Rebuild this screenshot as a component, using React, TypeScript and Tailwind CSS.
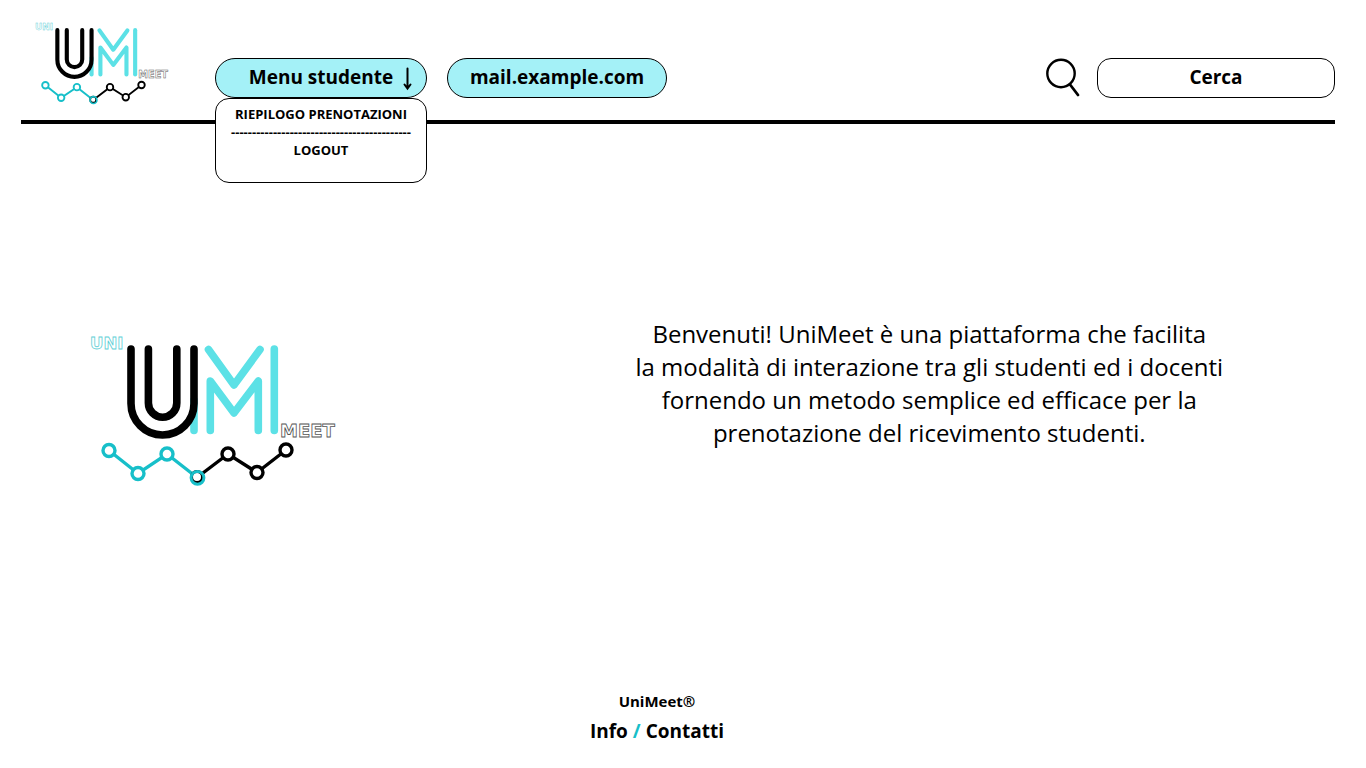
import { useState } from "react";

function Logo({ className }: { className: string }) {
  return (
    <svg viewBox="88 334 256 155" className={className} role="img" aria-label="UniMeet">
      <g fill="none" strokeLinecap="round" strokeLinejoin="round" strokeWidth="7.6">
        <g stroke="#5ce1e6">
          <path d="M194 400V430.5" />
          <path d="M210.3 430.5V381L234 413L258.3 381V430.5" />
          <path d="M208.5 349.5L234 385L260 349.5" />
          <path d="M274.3 349V430.5" />
        </g>
        <g stroke="#000">
          <path d="M131 349V403.5A31.5 31.5 0 0 0 194 403.5V349" />
          <path d="M148.4 349V403A14.2 14.2 0 0 0 176.8 403V349" />
        </g>
      </g>
      <g fontFamily="DejaVu Sans" fontWeight="700" fill="#fff" strokeWidth="0.8">
        <text x="90" y="349" fontSize="16.5" stroke="#5fcfd6">
          UNI
        </text>
        <text x="280" y="437" fontSize="18" stroke="#555">
          MEET
        </text>
      </g>
      <g strokeWidth="3.4" fill="#fff">
        <path d="M197 477.5L228 454L257 472.5L286 450" stroke="#000" fill="none" />
        <path d="M109 450.5L138 473.5L167 454L197 477.5" stroke="#17bfc9" fill="none" />
        <g stroke="#000">
          <circle cx="228" cy="454" r="6" />
          <circle cx="257" cy="472.5" r="6" />
          <circle cx="286" cy="450" r="6" />
          <circle cx="197" cy="477" r="5.5" strokeWidth="3" />
        </g>
        <g stroke="#17bfc9">
          <circle cx="109" cy="450.5" r="6" />
          <circle cx="138" cy="473.5" r="6" />
          <circle cx="167" cy="454" r="6" />
          <circle cx="197.5" cy="477.8" r="6.4" fill="none" strokeWidth="3" />
        </g>
      </g>
    </svg>
  );
}

function StudentMenu() {
  const [open, setOpen] = useState(true);
  return (
    <div className="relative">
      <button
        type="button"
        aria-expanded={open}
        onClick={() => setOpen(!open)}
        className="relative h-10 w-[212px] rounded-full border border-black bg-[#a4f1f7] pb-0.5 text-[19px] leading-6 font-bold"
      >
        Menu studente
        <svg
          viewBox="0 0 10 24"
          className="absolute top-2 right-[13px] h-6 w-2.5"
          fill="none"
          stroke="#000"
          strokeWidth="2"
          strokeLinecap="round"
          aria-hidden="true"
        >
          <path d="M4.5 1.5V21M1.5 17.5L4.5 21.5L7.5 17.5" />
        </svg>
      </button>
      {open && (
        <nav className="absolute inset-x-0 top-full flex h-[85px] flex-col items-center rounded-[14px] border border-black bg-white pt-1.5 text-[13px] leading-[18px] font-bold whitespace-nowrap">
          <a href="#riepilogo">RIEPILOGO PRENOTAZIONI</a>
          <span aria-hidden="true">-------------------------------------------</span>
          <a href="#logout">LOGOUT</a>
        </nav>
      )}
    </div>
  );
}

export default function App() {
  return (
    <div className="flex min-h-screen flex-col bg-white font-['Open_Sans',sans-serif] text-black">
      <header className="mr-[31px] ml-[21px] flex h-[124px] items-end border-b-4 border-black">
        <Logo className="mr-[42px] mb-3.5 ml-[13px] w-[139px]" />
        <div className="mb-[22px] flex flex-1 items-center">
          <StudentMenu />
          <a
            href="#mail"
            className="ml-5 flex h-10 w-[220px] items-center justify-center rounded-full border border-black bg-[#a4f1f7] pb-0.5 text-[19px] leading-6 font-bold"
          >
            mail.example.com
          </a>
          <form role="search" className="ml-auto flex items-center gap-4">
            <button type="submit" aria-label="Avvia ricerca">
              <svg
                viewBox="0 0 36 40"
                className="h-10 w-9"
                fill="none"
                stroke="#000"
                strokeWidth="2.4"
                strokeLinecap="round"
                aria-hidden="true"
              >
                <circle cx="16" cy="15.5" r="13.7" />
                <path d="M25 26.5L33 37" strokeWidth="2.8" />
              </svg>
            </button>
            <input
              type="text"
              aria-label="Cerca"
              placeholder="Cerca"
              className="h-10 w-[238px] rounded-[14px] border border-black pb-0.5 text-center text-[19px] leading-6 font-bold placeholder:text-black placeholder:opacity-100"
            />
          </form>
        </div>
      </header>

      <main className="flex flex-1 items-start justify-between pt-[193px] pr-[143px] pl-22">
        <Logo className="mt-[17px] w-64" />
        <p className="text-center text-[24px] leading-[33px]">
          Benvenuti! UniMeet è una piattaforma che facilita
          <br />
          la modalità di interazione tra gli studenti ed i docenti
          <br />
          fornendo un metodo semplice ed efficace per la
          <br />
          prenotazione del ricevimento studenti.
        </p>
      </main>

      <footer className="flex flex-col items-center gap-1.5 pr-13 pb-[23px] font-bold">
        <p className="text-[15px] leading-5">UniMeet®</p>
        <p className="text-[19px] leading-7">
          <a href="#info">Info</a> <span className="text-[#17bfc9]">/</span> <a href="#contatti">Contatti</a>
        </p>
      </footer>
    </div>
  );
}
